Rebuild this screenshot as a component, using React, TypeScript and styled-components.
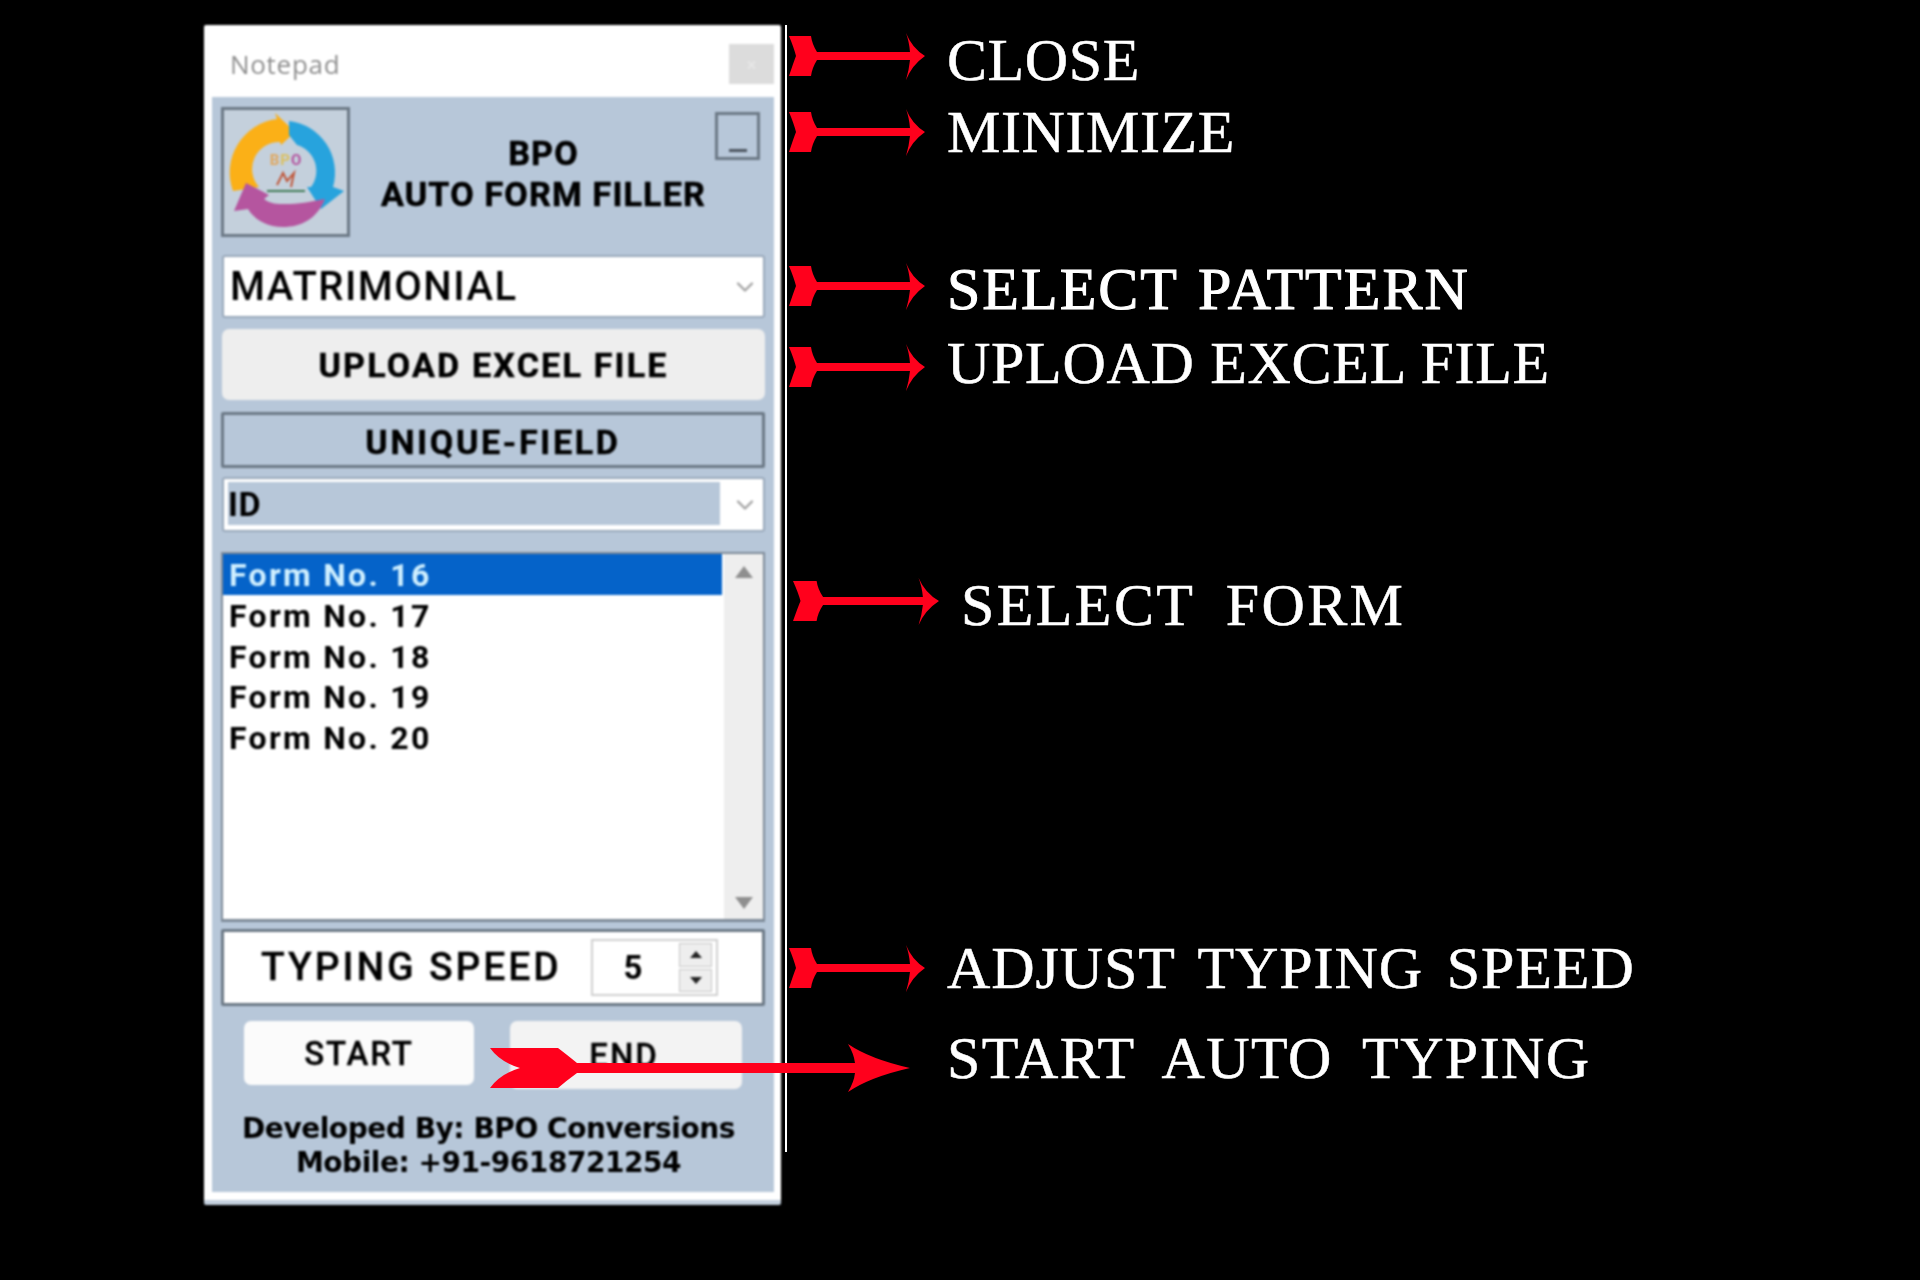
import React from 'react';
import styled, { createGlobalStyle } from 'styled-components';
import { ChevronDown } from 'lucide-react';

const GlobalStyle = createGlobalStyle`
    html, body {
        margin: 0;
        background: #000;
    }
`;

const Page = styled.div`
    width: 1920px;
    height: 1280px;
    overflow: hidden;
    display: flex;
    align-items: flex-start;
    padding: 25px 0 0 204px;
    box-sizing: border-box;
    background: #000;
    font-family: Roboto, "Liberation Sans", sans-serif;
`;

const Window = styled.div`
    width: 577px;
    height: 1180px;
    flex: none;
    display: flex;
    flex-direction: column;
    background: #fff;
    border-bottom: 5px solid #c4d0de;
    border-radius: 2px;
    box-sizing: border-box;
    padding: 0 7px 8px 8px;
    filter: blur(0.85px);
`;

const TitleBar = styled.div`
    height: 72px;
    flex: none;
    display: flex;
    align-items: center;
    justify-content: space-between;
    padding: 6px 0 0 18px;
    box-sizing: border-box;
`;

const TitleText = styled.span`
    font-family: "Open Sans", sans-serif;
    font-size: 26px;
    letter-spacing: 0.7px;
    color: #8f8f8f;
`;

const CloseButton = styled.div`
    width: 45px;
    height: 40px;
    background: #dcdcdc;
    color: #e8e8e8;
    font-size: 18px;
    display: flex;
    align-items: center;
    justify-content: center;
`;

const Body = styled.div`
    flex: 1;
    display: flex;
    flex-direction: column;
    align-items: flex-start;
    background: #b7c7d9;
    padding: 10px 9px 0 9px;
    color: #000;
`;

const Header = styled.div`
    width: 544px;
    height: 130px;
    flex: none;
    display: flex;
    align-items: flex-start;
`;

const LogoBox = styled.div`
    width: 129px;
    height: 130px;
    flex: none;
    box-sizing: border-box;
    border: 3px solid #6c7986;
    background: #c4d0dc;
    svg {
        display: block;
        margin: -3px;
    }
`;

const AppName = styled.div`
    flex: 1;
    padding: 26px 0 0 22px;
    text-align: center;
    font-weight: 700;
    font-size: 34px;
    line-height: 41px;
    letter-spacing: 1.2px;
    -webkit-text-stroke: 0.6px #000;
`;

const MinimizeButton = styled.div`
    width: 45px;
    height: 48px;
    flex: none;
    margin: 5px 5px 0 0;
    box-sizing: border-box;
    border: 3px solid #6c7986;
    display: flex;
    align-items: flex-end;
    justify-content: center;
    padding-bottom: 5px;
    &::after {
        content: '';
        width: 18px;
        height: 3px;
        background: #4c5560;
    }
`;

const Dropdown = styled.div<{ $height: number; $top: number }>`
    width: 543px;
    height: ${(p) => p.$height}px;
    flex: none;
    margin: ${(p) => p.$top}px 0 0 1px;
    box-sizing: border-box;
    background: #fff;
    border: 2px solid #98a8ba;
    border-radius: 3px;
    display: flex;
    align-items: center;
    padding-right: 4px;
    color: #a3a3a3;
`;

const DropdownValue = styled.div<{ $selected?: boolean }>`
    flex: 1;
    align-self: stretch;
    margin: ${(p) => (p.$selected ? '3px 11px 5px 4px' : '0 11px 0 6px')};
    background: ${(p) => (p.$selected ? '#b7c7d9' : 'transparent')};
    display: flex;
    align-items: center;
    color: #000;
    font-size: ${(p) => (p.$selected ? 34 : 40)}px;
    font-weight: ${(p) => (p.$selected ? 700 : 500)};
    letter-spacing: ${(p) => (p.$selected ? 0.6 : 1.5)}px;
`;

const UploadButton = styled.div`
    width: 543px;
    height: 71px;
    flex: none;
    margin: 11px 0 0 1px;
    background: #eeeeee;
    border-radius: 7px;
    display: flex;
    align-items: center;
    justify-content: center;
    font-size: 34px;
    font-weight: 700;
    letter-spacing: 2.2px;
    -webkit-text-stroke: 0.5px #000;
`;

const SectionHeading = styled.div`
    width: 544px;
    height: 56px;
    flex: none;
    margin-top: 12px;
    padding-top: 3px;
    box-sizing: border-box;
    border: 3px solid #6c7986;
    border-radius: 2px;
    display: flex;
    align-items: center;
    justify-content: center;
    font-size: 34px;
    font-weight: 700;
    letter-spacing: 2.7px;
    -webkit-text-stroke: 0.5px #000;
`;

const ListBox = styled.div`
    width: 544px;
    height: 370px;
    flex: none;
    margin-top: 20px;
    box-sizing: border-box;
    background: #fff;
    border: 2px solid #7d8a98;
    border-bottom-width: 3px;
    display: flex;
`;

const ListRows = styled.div`
    flex: 1;
`;

const ListRow = styled.div<{ $active?: boolean }>`
    height: 40.7px;
    width: 499px;
    padding: 2px 0 0 6px;
    box-sizing: border-box;
    display: flex;
    align-items: center;
    font-size: 32px;
    font-weight: 700;
    letter-spacing: 2.3px;
    background: ${(p) => (p.$active ? '#0563c9' : 'transparent')};
    color: ${(p) => (p.$active ? '#cfefff' : '#000')};
`;

const ScrollTrack = styled.div`
    width: 39px;
    flex: none;
    background: #eeeeee;
    display: flex;
    flex-direction: column;
    align-items: center;
    justify-content: space-between;
    padding: 12px 0 10px;
    box-sizing: border-box;
`;

const ScrollArrow = styled.div<{ $down?: boolean }>`
    width: 0;
    height: 0;
    border-left: 9px solid transparent;
    border-right: 9px solid transparent;
    ${(p) => (p.$down ? 'border-top: 12px solid #8f8f8f;' : 'border-bottom: 12px solid #8f8f8f;')}
`;

const SpeedRow = styled.div`
    width: 544px;
    height: 77px;
    flex: none;
    margin-top: 7px;
    box-sizing: border-box;
    background: #fff;
    border: 3px solid #6c7986;
    border-radius: 2px;
    display: flex;
    align-items: center;
    padding-left: 37px;
`;

const SpeedLabel = styled.span`
    width: 330px;
    flex: none;
    margin-bottom: 2px;
    font-size: 39px;
    font-weight: 500;
    letter-spacing: 2.9px;
    white-space: nowrap;
    -webkit-text-stroke: 0.3px #000;
`;

const SpeedInput = styled.div`
    width: 127px;
    height: 57px;
    flex: none;
    box-sizing: border-box;
    border: 2px solid #d0d0d0;
    display: flex;
    align-items: center;
    font-size: 33px;
    font-weight: 700;
`;

const SpeedValue = styled.span`
    flex: 1;
    padding-right: 6px;
    text-align: center;
`;

const SpinColumn = styled.div`
    width: 33px;
    height: 100%;
    margin-right: 4px;
    padding: 2px 0;
    box-sizing: border-box;
    display: flex;
    flex-direction: column;
    gap: 2px;
`;

const SpinButton = styled.div<{ $down?: boolean }>`
    flex: 1;
    background: #eeeeee;
    border: 1px solid #c6c6c6;
    display: flex;
    align-items: center;
    justify-content: center;
    &::after {
        content: '';
        border-left: 6px solid transparent;
        border-right: 6px solid transparent;
        ${(p) => (p.$down ? 'border-top: 7px solid #222;' : 'border-bottom: 7px solid #222;')}
    }
`;

const ActionRow = styled.div`
    width: 544px;
    flex: none;
    margin-top: 15px;
    display: flex;
    gap: 36px;
    padding-left: 23px;
    box-sizing: border-box;
`;

const ActionButton = styled.div<{ $end?: boolean }>`
    width: ${(p) => (p.$end ? 232 : 230)}px;
    height: ${(p) => (p.$end ? 68 : 64)}px;
    background: ${(p) => (p.$end ? '#f3f3f3' : '#fbfbfb')};
    border-radius: 7px;
    display: flex;
    align-items: center;
    justify-content: center;
    padding-right: ${(p) => (p.$end ? 4 : 0)}px;
    box-sizing: border-box;
    font-size: 33px;
    font-weight: 500;
    letter-spacing: 1.9px;
    -webkit-text-stroke: 0.3px #000;
`;

const Credits = styled.div`
    width: 544px;
    flex: none;
    margin-top: 23px;
    padding-right: 9px;
    box-sizing: border-box;
    text-align: center;
    font-family: "DejaVu Sans", sans-serif;
    font-size: 28px;
    font-weight: 700;
    line-height: 34px;
    letter-spacing: -0.45px;
    color: #000;
`;

const Callouts = styled.div`
    width: 1000px;
    height: 1127px;
    flex: none;
    margin-left: 4px;
    border-left: 2px solid #fff;
    position: relative;
    font-family: "Liberation Serif", serif;
    color: #fff;
`;

const CalloutRow = styled.div<{ $top: number; $inset?: number }>`
    height: 60px;
    margin-top: ${(p) => p.$top}px;
    padding-left: ${(p) => p.$inset ?? 2}px;
    display: flex;
    align-items: center;
    gap: 22px;
`;

// $drop nudges the label off the arrow's centre line: the labels don't sit level with their arrows
const CalloutText = styled.span<{ $words?: number; $track?: number; $bold?: boolean; $drop?: number }>`
    font-size: 60px;
    line-height: 60px;
    white-space: nowrap;
    margin-top: ${(p) => p.$drop ?? 0}px;
    word-spacing: ${(p) => p.$words ?? 0}px;
    letter-spacing: ${(p) => p.$track ?? 0}px;
    -webkit-text-stroke: ${(p) => (p.$bold ? '1px #fff' : '0.5px #fff')};
`;

const ArrowIcon = styled.svg`
    flex: none;
`;

const OverlayArrow = styled.svg`
    position: absolute;
    left: -297px;
    top: 1019px;
`;

const Arrow = ({ width = 136 }: { width?: number }) => (
    <ArrowIcon width={width} height="47" viewBox="0 0 136 47" preserveAspectRatio="none">
        <path
            fill="#ff001c"
            d="M0 3 H22 Q23 11 28 19 H121 Q120 8 117 0 Q123 15 136 23 Q123 32 117 47 Q120 37 121 27 H28 Q23 35 22 43 H0 Q5 28 7 23 Q5 15 0 3 Z"
        />
    </ArrowIcon>
);

const Logo = () => (
    <svg width="130" height="130" viewBox="0 0 130 130">
        <path fill="#fbb017" d="M12 84 A54 54 0 0 1 56 12 L54 6 L74 25 L60 38 L59 35 A27 27 0 0 0 38 80 Z" />
        <path fill="#27a3dd" d="M68 14 A52 52 0 0 1 112 80 L123 84 L100 102 L86 80 L90 80 A27 27 0 0 0 76 38 L68 28 Z" />
        <path
            fill="#b5559f"
            d="M104 92 C96 112 80 120 62 120 C45 120 33 112 27 102 L13 104 L25 76 L48 88 L43 92 C50 97 56 97 64 97 C78 97 88 95 104 92 Z"
        />
        <text x="65" y="58" textAnchor="middle" fontSize="15" fontWeight="700" letterSpacing="1">
            <tspan fill="#e0a860">B</tspan>
            <tspan fill="#dcc060">P</tspan>
            <tspan fill="#b5559f">O</tspan>
        </text>
        <path fill="none" stroke="#c0573a" strokeWidth="2" d="M56 78 L62 66 L66 74 L73 66 L70 80" />
        <path stroke="#3f7a55" strokeWidth="2" d="M46 84 H84" />
    </svg>
);

const App = () => {
    const forms = [16, 17, 18, 19, 20];

    return (
        <Page>
            <GlobalStyle />
            <Window>
                <TitleBar>
                    <TitleText>Notepad</TitleText>
                    <CloseButton>×</CloseButton>
                </TitleBar>
                <Body>
                    <Header>
                        <LogoBox><Logo /></LogoBox>
                        <AppName>BPO<br />AUTO FORM FILLER</AppName>
                        <MinimizeButton />
                    </Header>
                    <Dropdown $height={63} $top={18}>
                        <DropdownValue>MATRIMONIAL</DropdownValue>
                        <ChevronDown size={28} strokeWidth={2} />
                    </Dropdown>
                    <UploadButton>UPLOAD EXCEL FILE</UploadButton>
                    <SectionHeading>UNIQUE-FIELD</SectionHeading>
                    <Dropdown $height={55} $top={9}>
                        <DropdownValue $selected>ID</DropdownValue>
                        <ChevronDown size={28} strokeWidth={2} />
                    </Dropdown>
                    <ListBox>
                        <ListRows>
                            {forms.map((n, i) => (
                                <ListRow key={n} $active={i === 0}>Form No. {n}</ListRow>
                            ))}
                        </ListRows>
                        <ScrollTrack>
                            <ScrollArrow />
                            <ScrollArrow $down />
                        </ScrollTrack>
                    </ListBox>
                    <SpeedRow>
                        <SpeedLabel>TYPING SPEED</SpeedLabel>
                        <SpeedInput>
                            <SpeedValue>5</SpeedValue>
                            <SpinColumn>
                                <SpinButton />
                                <SpinButton $down />
                            </SpinColumn>
                        </SpeedInput>
                    </SpeedRow>
                    <ActionRow>
                        <ActionButton>START</ActionButton>
                        <ActionButton $end>END</ActionButton>
                    </ActionRow>
                    <Credits>
                        Developed By: BPO Conversions<br />
                        Mobile: +91-9618721254
                    </Credits>
                </Body>
            </Window>
            <Callouts>
                <CalloutRow $top={1}>
                    <Arrow /><CalloutText $track={0.6} $drop={8}>CLOSE</CalloutText>
                </CalloutRow>
                <CalloutRow $top={16}>
                    <Arrow /><CalloutText $track={0.6}>MINIMIZE</CalloutText>
                </CalloutRow>
                <CalloutRow $top={94}>
                    <Arrow /><CalloutText $words={3} $track={2} $bold $drop={5}>SELECT PATTERN</CalloutText>
                </CalloutRow>
                <CalloutRow $top={21}>
                    <Arrow /><CalloutText $words={0} $track={0.7} $drop={-8}>UPLOAD EXCEL FILE</CalloutText>
                </CalloutRow>
                <CalloutRow $top={174} $inset={6}>
                    <Arrow width={146} /><CalloutText $words={14} $track={2.4} $drop={8}>SELECT FORM</CalloutText>
                </CalloutRow>
                <CalloutRow $top={307}>
                    <Arrow /><CalloutText $words={8} $track={0.9}>ADJUST TYPING SPEED</CalloutText>
                </CalloutRow>
                <CalloutRow $top={40} $inset={160}>
                    <OverlayArrow width="420" height="48" viewBox="0 0 420 48">
                        <path
                            fill="#ff001c"
                            d="M0 4 H68 Q76 10 87 19 H365 Q364 10 358 0 Q380 15 420 24 Q380 33 358 48 Q364 38 365 29 H87 Q76 37 68 44 H0 Q10 30 30 24 Q10 18 0 4 Z"
                        />
                    </OverlayArrow>
                    <CalloutText $words={14} $track={1.4} $drop={-20}>START AUTO TYPING</CalloutText>
                </CalloutRow>
            </Callouts>
        </Page>
    );
};

export default App;
